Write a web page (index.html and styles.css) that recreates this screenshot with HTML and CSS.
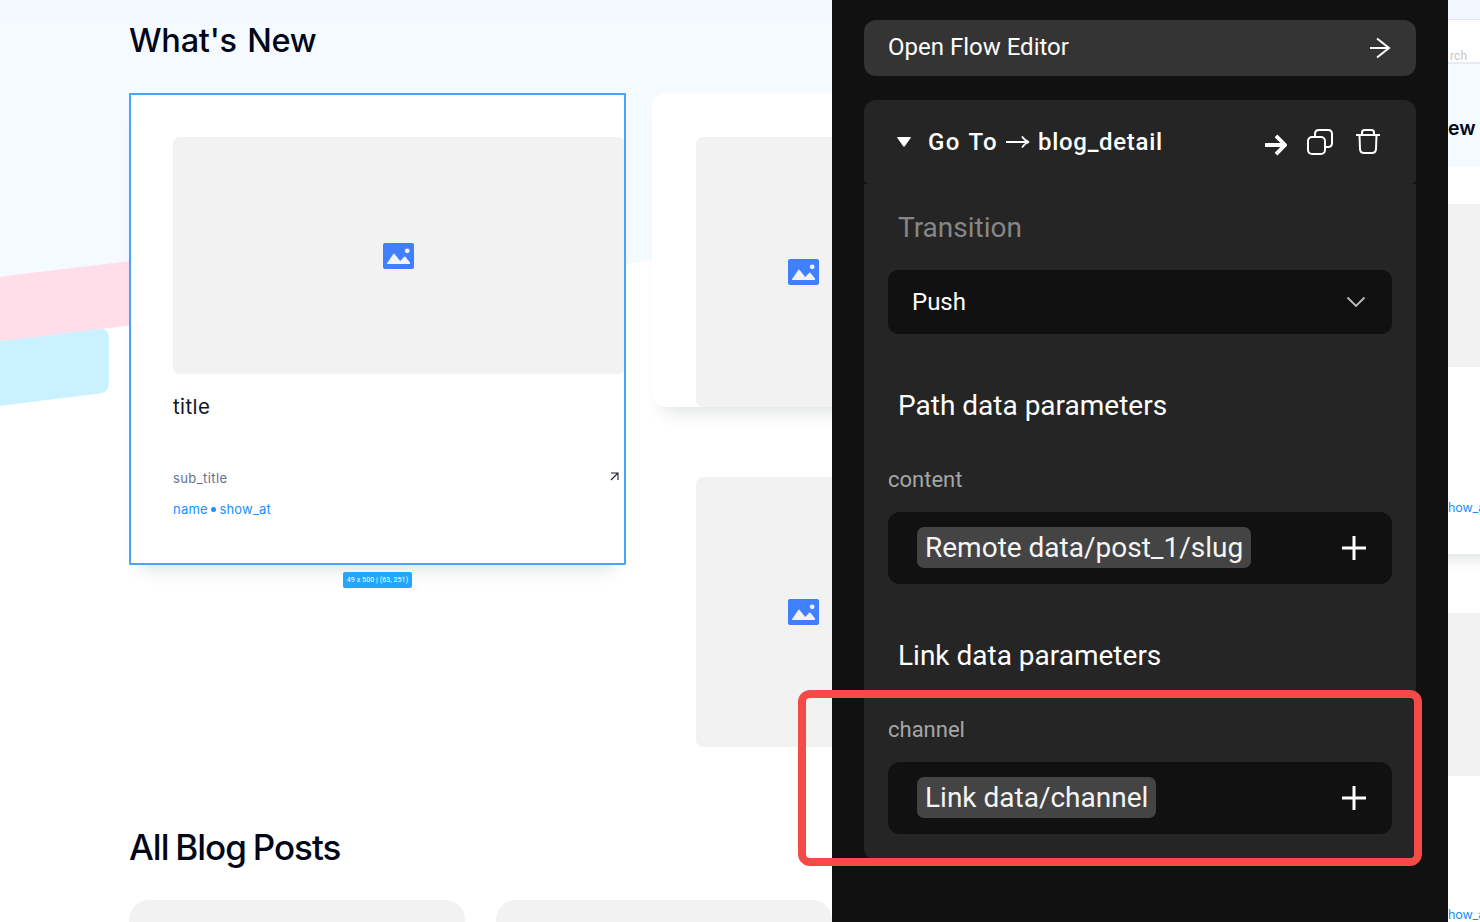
FILE: index.html
```html
<!DOCTYPE html>
<html lang="en">
<head>
<meta charset="utf-8">
<title>Flow editor</title>
<link rel="stylesheet" href="styles.css">
</head>
<body>
<svg class="defs" width="0" height="0" aria-hidden="true">
  <symbol id="picture" viewBox="0 0 31 26">
    <rect width="31" height="26" rx="2" fill="#4080ff"/>
    <path d="M4 20.200 10.500 10.800Q10.900 10.300 11.400 10.800L17.200 18 21.300 13.800Q21.900 13.200 22.400 13.800L27 19.500V21H4Z" fill="#f2f2f2"/>
    <circle cx="24.2" cy="7.8" r="2.4" fill="#f2f2f2"/>
  </symbol>
  <symbol id="plus" viewBox="0 0 24 24"><path d="M0 12H24M12 0V24" stroke="#fff" stroke-width="3"/></symbol>
</svg>
<div class="app">
  <main class="canvas">
    <svg class="backdrop" width="832" height="420" viewBox="0 0 832 420">
      <path d="M0 0H832V240L0 336Z" fill="#f5faff"/>
      <rect width="832" height="26" fill="#f4f8ff"/>
      <rect y="26" width="832" height="1" fill="#f9fcff"/>
      <path d="M0 276.800 130 261V325.500L0 341.500Z" fill="#ffdee9"/>
      <path d="M0 341.300 99 329.200Q109 328.200 109 338.500V383.500Q109 392 100 393.400L0 405.800Z" fill="#c9f1ff"/>
    </svg>
    <h1 class="heading">What's New</h1>
    <section class="news">
      <article class="card selected">
        <div class="thumb large"><svg width="31" height="26"><use href="#picture"/></svg></div>
        <h2 class="title">title</h2>
        <div class="sub"><span>sub_title</span><svg width="9" height="9" viewBox="0 0 9 9"><path d="M1 1H8V8M8 1 1 8" fill="none" stroke="#1d2233" stroke-width="1.1"/></svg></div>
        <p class="meta">name <i></i> show_at</p>
        <span class="size-tag"><b>49 x 500 | (63, 251)</b></span>
      </article>
      <div class="stack">
        <article class="card small"><div class="thumb"><svg width="31" height="26"><use href="#picture"/></svg></div></article>
        <article class="card small plain"><div class="thumb"><svg width="31" height="26"><use href="#picture"/></svg></div></article>
      </div>
    </section>
    <h2 class="heading posts-heading">All Blog Posts</h2>
    <section class="posts"><div class="post"></div><div class="post"></div></section>
  </main>

  <aside class="panel">
    <div class="open"><span>Open Flow Editor</span>
      <svg width="22" height="22" viewBox="0 0 22 22"><path d="M1 11H20M8 1.500 20 11 8 20.500" fill="none" stroke="#fff" stroke-width="2"/></svg>
    </div>
    <header class="action">
      <svg class="caret" width="14" height="10" viewBox="0 0 14 10"><path d="M.8 0H13.200Q14.400 0 13.600 1L8 9Q7 10 6 9L.4 1Q-.4 0 .8 0Z" fill="#fff"/></svg>
      <div class="action-name"><span class="goto">Go To</span>
        <svg width="24" height="14" viewBox="0 0 24 14"><path d="M0 7H22M16 1.500Q19 6 23 7 19 8 16 12.500" fill="none" stroke="#fff" stroke-width="1.8"/></svg>
        <span class="dest">blog_detail</span></div>
      <svg class="go" width="22" height="22" viewBox="0 0 22 22"><path d="M0 11H20M11 1.800 20 11 11 20.200" fill="none" stroke="#fff" stroke-width="3.8"/></svg>
      <svg class="copy" width="26" height="26" viewBox="0 0 26 26" fill="none" stroke="#fff" stroke-width="2"><rect x="1" y="8" width="17" height="17" rx="4"/><path d="M8 8V5Q8 1 12 1H21Q25 1 25 5V14Q25 18 21 18H18"/></svg>
      <svg class="trash" width="24" height="26" viewBox="0 0 24 26" fill="none" stroke="#fff" stroke-width="2"><path d="M0 7H24M6 7V4.500Q6 2 8.500 2H15.500Q18 2 18 4.500V7"/><path d="M3.500 7 4 21Q4.200 25 8 25H16Q19.800 25 20 21L20.500 7"/></svg>
    </header>
    <section class="settings">
      <h3 class="group muted">Transition</h3>
      <div class="select"><span>Push</span><svg width="20" height="12" viewBox="0 0 20 12"><path d="M1.500 1.500 10 10 18.500 1.500" fill="none" stroke="#bbb" stroke-width="1.9"/></svg></div>
      <h3 class="group path">Path data parameters</h3>
      <label class="label">content</label>
      <div class="field"><span class="chip remote">Remote data/post_1/slug</span><svg width="24" height="24"><use href="#plus"/></svg></div>
      <h3 class="group link">Link data parameters</h3>
      <label class="label">channel</label>
      <div class="field"><span class="chip channel">Link data/channel</span><svg width="24" height="24"><use href="#plus"/></svg></div>
    </section>
  </aside>

  <div class="strip">
    <div class="strip-top"></div>
    <div class="strip-search"><span>rch</span></div>
    <div class="strip-title">ew</div>
    <div class="strip-card"><div class="strip-thumb"></div><span class="strip-meta">how_a</span></div>
    <div class="strip-thumb second"></div>
    <span class="strip-meta last">how_a</span>
  </div>
</div>
<div class="highlight"></div>
</body>
</html>
```
FILE: styles.css
```css
* { box-sizing: border-box; }
body { margin: 0; width: 1480px; height: 922px; overflow: hidden; background: #fff; font-family: Roboto, "Liberation Sans", sans-serif; }
h1, h2, h3, p { margin: 0; font-weight: 400; }
svg { display: block; flex: none; }
.defs { position: absolute; }
.app { display: grid; grid-template-columns: 832px 616px 32px; height: 922px; }

.canvas { position: relative; padding-left: 129px; overflow: hidden; }
.backdrop { position: absolute; left: 0; top: 0; }
.heading { position: relative; height: 93.4px; padding-top: 17px; font: 500 32.5px/48px Inter, sans-serif; color: #020617; white-space: nowrap; letter-spacing: -.25px; word-spacing: 2px; }
.news { position: relative; display: grid; grid-template-columns: 497px 450px; gap: 26px; height: 654.6px; align-items: start; }
.card { background: #fff; border-radius: 14px; }
.selected { position: relative; height: 472px; padding: 44px 0 0 44px; border-radius: 14px; box-shadow: 0 16px 18px -12px rgba(30, 50, 50, .15); }
.selected::after { content: ""; position: absolute; inset: 0; border: 2px solid #49a5fc; border-radius: 1px; }
.thumb { display: flex; align-items: center; justify-content: center; background: #f2f2f2; border-radius: 7px; }
.large { width: 452px; height: 236.5px; padding-right: 2px; }
.title { margin-top: 19px; font: 400 20.5px/28px Inter, sans-serif; letter-spacing: .4px; color: #0f1528; }
.sub { display: flex; justify-content: space-between; align-items: center; margin-top: 47px; padding-right: 6px; height: 20px; font: 13px/20px Inter, sans-serif; letter-spacing: .4px; color: #64708a; }
.sub svg { margin: 0 1px 2px 0; }
.meta { display: flex; gap: 4px; align-items: center; margin-top: 11px; font: 13px/20px Inter, sans-serif; letter-spacing: .2px; color: #1890ff; }
.meta i { width: 5px; height: 5px; margin: 2px -.7px 0; border-radius: 50%; background: #1890ff; }
.size-tag { position: absolute; left: 214px; top: 479px; width: 69px; height: 16px; border-radius: 2px; background: #22a7ff; color: #fff; display: grid; place-items: center; white-space: nowrap; }
.size-tag b { font: 7px/16px Roboto, sans-serif; letter-spacing: .1px; }
.stack { display: grid; gap: 26px; }
.small { height: 314px; padding: 44px 0 0 44px; box-shadow: 0 16px 18px -12px rgba(30, 50, 50, .15); }
.small .thumb { width: 406px; height: 270px; padding-right: 191px; }
.plain { box-shadow: none; }
.posts-heading { height: 152px; padding-top: 75px; font-size: 35px; letter-spacing: -1px; word-spacing: -1.5px; }
.posts { display: grid; grid-template-columns: 336px 336px; gap: 31px; }
.post { height: 60px; border-radius: 20px; background: #f2f2f2; }

.panel { background: #111; padding: 20px 32px 0; color: #fff; }
.open { display: flex; align-items: center; justify-content: space-between; height: 56px; padding: 0 25px 0 24px; border-radius: 12px; background: #343434; font-size: 24px; }
.open span { padding-bottom: 2px; }
.action { display: flex; align-items: center; margin-top: 24px; height: 84px; padding: 0 36px 0 33px; border-radius: 12px 12px 5px 5px; background: #252525; font-size: 24px; font-weight: 500; }
.action-name { display: flex; align-items: center; margin-left: 17px; width: 338px; gap: 8px; letter-spacing: .7px; }
.goto { width: 70px; letter-spacing: 1.4px; word-spacing: 1px; white-space: nowrap; }
.go { margin-top: 6px; }
.copy { margin-left: 20px; }
.trash { margin-left: 23px; margin-bottom: 2px; }
.settings { height: 676px; padding: 24px 24px 0; border-radius: 0 0 12px 12px; background: #252525; }
.group { height: 40px; padding-left: 10px; font-size: 28px; line-height: 40px; }
.muted { color: #868686; }
.select { display: flex; align-items: center; justify-content: space-between; height: 64px; margin-top: 22px; padding: 0 26px 0 24px; border-radius: 10px; background: #111; font-size: 24px; }
.path { margin-top: 52px; }
.label { display: block; margin-top: 38px; height: 32px; font-size: 22px; line-height: 32px; color: #a6a6a6; }
.field { display: flex; align-items: center; justify-content: space-between; height: 72px; margin-top: 16px; padding: 0 26px 2px 29px; border-radius: 12px; background: #111; }
.field svg { margin-top: 2px; }
.link { margin-top: 52px; }
.chip { height: 41px; padding: 0 8px; border-radius: 7px; background: #444; color: #f5f5f5; font-size: 28px; line-height: 41px; white-space: nowrap; }

.strip { overflow: hidden; color: #020617; font-family: Inter, sans-serif; }
.strip-top { height: 20px; background: #f2f7ff; border-bottom: 1px solid #e3e7ef; }
.strip-search { height: 44px; padding: 28px 0 0 2px; border-bottom: 2px solid #e8ecf1; font: 12px/16px Roboto, sans-serif; letter-spacing: .1px; color: #c7c7c7; }
.strip-title { height: 103px; padding-top: 51px; background: #f5faff; font-size: 19.5px; line-height: 26px; font-weight: 600; }
.strip-card { height: 387px; margin: 0 -20px; padding: 37px 20px 0; box-shadow: 0 10px 14px -6px rgba(30, 50, 50, .15); }
.strip-thumb { height: 163px; background: #f2f2f2; }
.strip-meta { display: block; margin-top: 131px; font-size: 12.5px; line-height: 20px; color: #1890ff; white-space: nowrap; letter-spacing: -.1px; }
.strip-card .strip-meta, .last { width: 40px; }
.second { margin-top: 59px; }
.last { margin-top: 129px; }
.highlight { position: absolute; left: 798px; top: 690px; width: 624px; height: 176px; border: 8px solid #f54a45; border-radius: 12px; }
```
